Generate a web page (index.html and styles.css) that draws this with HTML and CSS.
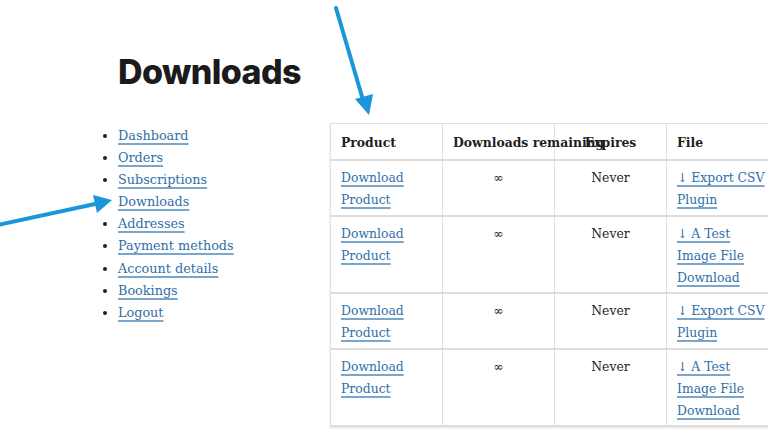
FILE: index.html
```html
<!DOCTYPE html>
<html lang="en">
<head>
<meta charset="utf-8">
<title>Downloads</title>
<link rel="stylesheet" href="styles.css">
</head>
<body>
<div class="page">
  <h1 class="title">Downloads</h1>
  <div class="layout">
    <nav class="account-nav">
      <ul>
        <li><a href="#">Dashboard</a></li>
        <li><a href="#">Orders</a></li>
        <li><a href="#">Subscriptions</a></li>
        <li><a href="#">Downloads</a></li>
        <li><a href="#">Addresses</a></li>
        <li><a href="#">Payment methods</a></li>
        <li><a href="#">Account details</a></li>
        <li><a href="#">Bookings</a></li>
        <li><a href="#">Logout</a></li>
      </ul>
    </nav>
    <table class="downloads">
      <colgroup><col class="c"><col class="c"><col class="c"><col class="c"></colgroup>
      <thead>
        <tr><th>Product</th><th class="mid">Downloads remaining</th><th class="mid">Expires</th><th>File</th></tr>
      </thead>
      <tbody>
        <tr><td><a href="#">Download Product</a></td><td class="mid">∞</td><td class="mid">Never</td><td><a href="#">↓ Export CSV Plugin</a></td></tr>
        <tr><td><a href="#">Download Product</a></td><td class="mid">∞</td><td class="mid">Never</td><td><a href="#">↓ A Test Image File Download</a></td></tr>
        <tr><td><a href="#">Download Product</a></td><td class="mid">∞</td><td class="mid">Never</td><td><a href="#">↓ Export CSV Plugin</a></td></tr>
        <tr><td><a href="#">Download Product</a></td><td class="mid">∞</td><td class="mid">Never</td><td><a href="#">↓ A Test Image File Download</a></td></tr>
      </tbody>
    </table>
  </div>
</div>
<svg class="arrows" width="768" height="435" viewBox="0 0 768 435" aria-hidden="true">
  <line x1="336" y1="8" x2="363" y2="100" stroke="#1c96da" stroke-width="4" stroke-linecap="round"/>
  <polygon points="369,115 355,99 373,94" fill="#1c96da"/>
  <line x1="-2" y1="225" x2="95" y2="204" stroke="#1c96da" stroke-width="4" stroke-linecap="round"/>
  <polygon points="112,200 93,195 97,213" fill="#1c96da"/>
</svg>
</body>
</html>
```
FILE: styles.css
```css
html, body {
  margin: 0;
  padding: 0;
  background: #fff;
  overflow: hidden;
}
body {
  width: 768px;
  height: 435px;
  position: relative;
  font-family: "DejaVu Serif", "Liberation Serif", serif;
  color: #222;
}
.page {
  padding: 50px 0 0 118px;
}
.title {
  margin: 0 0 30px;
  font-family: Inter, "DejaVu Sans", sans-serif;
  font-weight: 800;
  font-size: 34px;
  line-height: 44px;
  letter-spacing: -0.6px;
  color: #1b1b1b;
}
.layout {
  display: flex;
  align-items: flex-start;
}
.account-nav {
  width: 212px;
  flex: none;
  font-size: 12.8px;
  padding-top: 1px;
}
.account-nav ul {
  margin: 0;
  padding: 0;
}
.account-nav li {
  line-height: 22.1px;
}
a {
  color: #2f6fa8;
  text-decoration: underline;
  text-decoration-color: #7aa6cc;
  text-underline-offset: 3px;
  text-decoration-thickness: 1.5px;
}
.downloads {
  flex: none;
  border-collapse: collapse;
  table-layout: fixed;
  width: 448px;
  font-size: 12.4px;
  border: 1px solid #dedede;
  box-shadow: 0 1px 2px rgba(0,0,0,0.12);
  margin-top: -1px;
}
.downloads col.c {
  width: 112px;
}
.downloads th,
.downloads td {
  border: 1px solid #e0e0e0;
  text-align: left;
  vertical-align: top;
  padding: 6px 10px 3px;
  line-height: 22.2px;
}
.downloads th {
  padding: 8px 10px 5px;
  font-weight: bold;
  white-space: nowrap;
  color: #1e1e1e;
}
.downloads tr {
  border-bottom: 2px solid #dddddd;
}
.downloads .mid {
  text-align: center;
}
.arrows {
  position: absolute;
  left: 0;
  top: 0;
  pointer-events: none;
}
```
